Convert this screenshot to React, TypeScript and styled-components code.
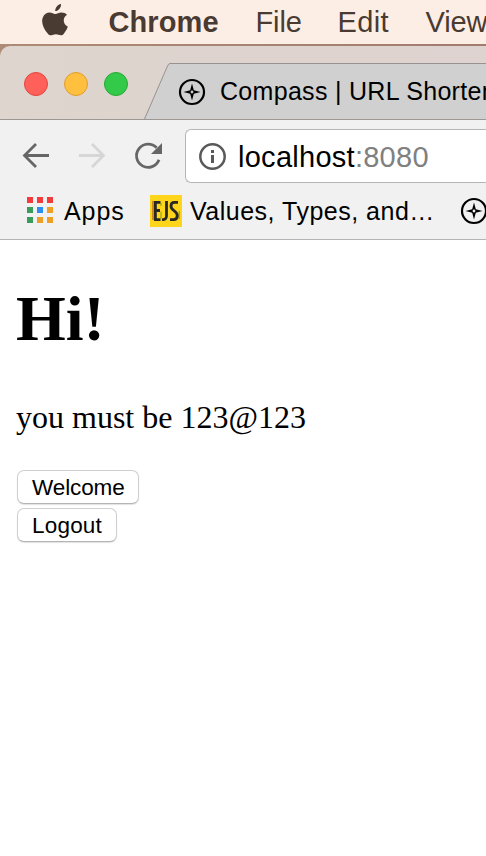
import React from "react";
import styled, { createGlobalStyle } from "styled-components";

const GlobalStyle = createGlobalStyle`
  html, body { margin: 0; padding: 0; background: #fff; }
  body { overflow: hidden; }
  * { box-sizing: border-box; }
  svg { display: block; flex: none; }
`;

const Screen = styled.div`
  width: 486px;
  height: 856px;
  overflow: hidden;
  display: flex;
  flex-direction: column;
  background: #fff;
  font-family: "Liberation Sans", Arial, sans-serif;
  color: #000;
`;

const MenuBar = styled.nav`
  flex: none;
  height: 44px;
  display: flex;
  background: #fdeee5;
  padding-left: 42px;
`;

const AppleSlot = styled.div`
  flex: none;
  width: 66.500px;
  padding-top: 4px;
`;

const MenuItem = styled.span<{ $width: number; $bold?: boolean; $tracking: number }>`
  flex: none;
  width: ${(p) => p.$width}px;
  font-size: 29px;
  line-height: 32px;
  padding-top: 6px;
  font-weight: ${(p) => (p.$bold ? 700 : 400)};
  letter-spacing: ${(p) => p.$tracking}px;
  color: #493a32;
  white-space: nowrap;
`;

const Desktop = styled.div`
  flex: none;
  background: linear-gradient(90deg, #ad8b76, #a17c6f);
  padding-top: 2px;
`;

const TabStrip = styled.div`
  height: 74px;
  display: flex;
  background: linear-gradient(90deg, #ded5ce, #ded3ce 60%, #dfd3d1);
  border-top-left-radius: 10px;
  border-bottom: 1px solid #9d9794;
  padding: 17px 0 0 24px;
`;

const WindowControls = styled.div`
  display: flex;
  gap: 16px;
  width: 120px;
  padding-top: 9px;
`;

const ControlDot = styled.i<{ $fill: string; $edge: string }>`
  width: 24px;
  height: 24px;
  border-radius: 50%;
  background: ${(p) => p.$fill};
  border: 1px solid ${(p) => p.$edge};
`;

const Tab = styled.div`
  flex: 1;
  min-width: 0;
  height: 56px;
  display: flex;
  overflow: hidden;
`;

const TabBody = styled.div`
  flex: 1;
  min-width: 0;
  display: flex;
  background: #d0d0d0;
  border-top: 1px solid #969291;
  padding: 14px 0 0 8px;
  gap: 14px;
`;

const TabTitle = styled.span`
  font-size: 25px;
  line-height: 26px;
  letter-spacing: 0.3px;
  white-space: nowrap;
`;

const Toolbar = styled.div`
  flex: none;
  height: 120px;
  background: #f1f1f1;
  border-bottom: 1px solid #b5b5b5;
`;

const AddressRow = styled.div`
  height: 68px;
  display: flex;
  padding: 9px 0 0 20px;
`;

const NavButton = styled.span<{ $width: number }>`
  flex: none;
  width: ${(p) => p.$width}px;
  padding-top: 11px;
`;

const AddressField = styled.div`
  flex: 1;
  min-width: 0;
  height: 54px;
  display: flex;
  background: #fff;
  border: 1px solid #b5b5b5;
  border-right: 0;
  border-radius: 6px 0 0 6px;
  padding: 12px 0 0 12px;
  gap: 10px;
`;

const Address = styled.span`
  font-size: 29px;
  line-height: 31px;
  letter-spacing: 0.27px;
`;

const Port = styled.span`
  color: #808080;
`;

const BookmarkRow = styled.div`
  height: 51px;
  display: flex;
  padding: 7px 0 0 27px;
`;

const AppsGrid = styled.span`
  flex: none;
  display: grid;
  grid-template-columns: repeat(3, 6px);
  grid-auto-rows: 6px;
  gap: 4px;
  width: 37px;
  padding-top: 2px;
`;

const AppsCell = styled.i<{ $color: string }>`
  background: ${(p) => p.$color};
`;

const BookmarkLabel = styled.span<{ $width: number; $tracking: number }>`
  flex: none;
  width: ${(p) => p.$width}px;
  font-size: 25px;
  line-height: 32px;
  letter-spacing: ${(p) => p.$tracking}px;
  white-space: nowrap;
`;

const EjsBadge = styled.span`
  flex: none;
  width: 40px;
`;

const BookmarkIcon = styled.span`
  flex: none;
  padding-top: 2px;
`;

const Page = styled.main`
  flex: 1;
  padding: 42px 16px 0;
`;

const Heading = styled.h1`
  margin: 0;
  font: bold 64px/74px "Liberation Serif", "Times New Roman", serif;
`;

const Greeting = styled.p`
  margin: 43px 0 0;
  font: 32px/36px "Liberation Serif", "Times New Roman", serif;
`;

const Actions = styled.div`
  margin-top: 35px;
  display: flex;
  flex-direction: column;
  gap: 4px;
  padding-left: 1px;
`;

const ActionButton = styled.button<{ $width: number; $tracking: number }>`
  width: ${(p) => p.$width}px;
  height: 34px;
  padding: 2px 0 0 14px;
  text-align: left;
  background: #fff;
  border: 1px solid #cfcfcf;
  border-bottom-color: #b5b5b5;
  border-radius: 7px;
  box-shadow: 0 1px 1px #e2e2e2;
  font: 22.500px/30px "Liberation Sans", Arial, sans-serif;
  letter-spacing: ${(p) => p.$tracking}px;
  color: #000;
`;

const AppleIcon = () => (
  <svg width="27" height="32" viewBox="0 0 27 32" fill="#493a32">
    <path d="M13.200 7.100C13 3.700 15.800.5 19 0c.4 3.500-2.500 6.900-5.800 7.100Z" />
    <path d="M25 10.800c-4.800 3-4.100 9.900.8 11.800-.8 2.600-2.200 4.800-3.800 6.800-2.800 3.600-5 .8-8.100.8-3.200 0-5.300 3-8.200-.7C1.600 25-1.200 18.300.8 13.400c1.400-3.500 4.700-5.200 8-4.700 1.900.3 3.200 1.400 4.700 1.400s3.300-1.500 5.900-1.500c2.300 0 4.300.9 5.600 2.200Z" />
  </svg>
);

const CompassIcon = () => (
  <svg width="28" height="28" viewBox="0 0 28 28">
    <circle cx="14" cy="14" r="12" fill="none" stroke="#000" strokeWidth="2.200" />
    <path fillRule="evenodd" d="M14 5.500 15.800 12.200l6.700 1.800-6.700 1.800L14 22.500l-1.800-6.700L5.500 14l6.700-1.800ZM14 12.600a1.400 1.400 0 1 0 0 2.800 1.400 1.400 0 0 0 0-2.800Z" />
  </svg>
);

const BackIcon = () => (
  <svg width="30" height="32" viewBox="0 0 30 32" fill="none" stroke="#666" strokeWidth="2.800">
    <path d="M16 4 4.500 15.500 16 27M4.500 15.500H29" />
  </svg>
);

const ForwardIcon = () => (
  <svg width="30" height="32" viewBox="0 0 30 32" fill="none" stroke="#d6d6d6" strokeWidth="2.800">
    <path d="M14 4 25.500 15.500 14 27M25.500 15.500H1" />
  </svg>
);

const ReloadIcon = () => (
  <svg width="30" height="32" viewBox="0 0 30 32">
    <path d="M22.600 7.800A11.600 11.600 0 1 0 25 19.800" fill="none" stroke="#666" strokeWidth="2.800" />
    <path d="M28 3v11H17Z" fill="#666" />
  </svg>
);

const InfoIcon = () => (
  <svg width="30" height="30" viewBox="0 0 30 30">
    <circle cx="14.500" cy="14.500" r="12.200" fill="none" stroke="#595959" strokeWidth="2.500" />
    <path d="M13 8h3v3h-3zM13 13h3v8h-3z" fill="#595959" />
  </svg>
);

const EjsIcon = () => (
  <svg width="32" height="32" viewBox="0 0 32 32" fill="none">
    <rect width="32" height="32" fill="#ffd51c" />
    <path d="M3 6v19" stroke="#c47818" strokeWidth="1.600" />
    <path d="M11 8v3m0 5.500v7M29.300 16v8" stroke="#a4ae20" strokeWidth="1.400" />
    <path d="M10.500 7.400H5.400v17.200h5.100M5.400 15.500H10M16.500 6v15q0 4-4.500 3.600" stroke="#292824" strokeWidth="2.800" />
    <path d="M28 7.400h-3.500q-3.500 0-3.500 3.600 0 2.700 3 4.600 3.300 2.200 3.300 5.200 0 3.800-3.800 3.800H20" stroke="#292824" strokeWidth="2.800" />
  </svg>
);

const RED = "#f43b3b";
const GREEN = "#3b9b5b";
const BLUE = "#2c8df5";
const AMBER = "#ee9f24";
const appColors = [RED, RED, RED, GREEN, BLUE, AMBER, GREEN, AMBER, AMBER];

export default function App() {
  return (
    <>
      <GlobalStyle />
      <Screen>
        <MenuBar>
          <AppleSlot><AppleIcon /></AppleSlot>
          <MenuItem $width={147} $bold $tracking={0.1}>Chrome</MenuItem>
          <MenuItem $width={82} $tracking={-0.1}>File</MenuItem>
          <MenuItem $width={88} $tracking={0.4}>Edit</MenuItem>
          <MenuItem $width={60.5} $tracking={-0.1}>View</MenuItem>
        </MenuBar>
        <Desktop>
          <TabStrip>
            <WindowControls>
              <ControlDot $fill="#ff6059" $edge="#e2443f" />
              <ControlDot $fill="#ffbf3f" $edge="#df9e30" />
              <ControlDot $fill="#34ca49" $edge="#24a933" />
            </WindowControls>
            <Tab>
              <svg width="26" height="56" viewBox="0 0 26 56">
                <path d="M0 56 23.500 3q1-2.500 2.500-2.500V56Z" fill="#d0d0d0" />
                <path d="M.5 56 23.500 3q1-2.500 2.500-2.500" fill="none" stroke="#969291" />
              </svg>
              <TabBody>
                <CompassIcon />
                <TabTitle>Compass | URL Shortener</TabTitle>
              </TabBody>
            </Tab>
          </TabStrip>
        </Desktop>
        <Toolbar>
          <AddressRow>
            <NavButton $width={58}><BackIcon /></NavButton>
            <NavButton $width={56}><ForwardIcon /></NavButton>
            <NavButton $width={51}><ReloadIcon /></NavButton>
            <AddressField>
              <InfoIcon />
              <Address>localhost<Port>:8080</Port></Address>
            </AddressField>
          </AddressRow>
          <BookmarkRow>
            <AppsGrid>
              {appColors.map((color, i) => <AppsCell key={i} $color={color} />)}
            </AppsGrid>
            <BookmarkLabel $width={86} $tracking={0.9}>Apps</BookmarkLabel>
            <EjsBadge><EjsIcon /></EjsBadge>
            <BookmarkLabel $width={270} $tracking={0.5}>Values, Types, and…</BookmarkLabel>
            <BookmarkIcon><CompassIcon /></BookmarkIcon>
          </BookmarkRow>
        </Toolbar>
        <Page>
          <Heading>Hi!</Heading>
          <Greeting>you must be 123@123</Greeting>
          <Actions>
            <ActionButton $width={122} $tracking={-0.1}>Welcome</ActionButton>
            <ActionButton $width={100} $tracking={0.2}>Logout</ActionButton>
          </Actions>
        </Page>
      </Screen>
    </>
  );
}
